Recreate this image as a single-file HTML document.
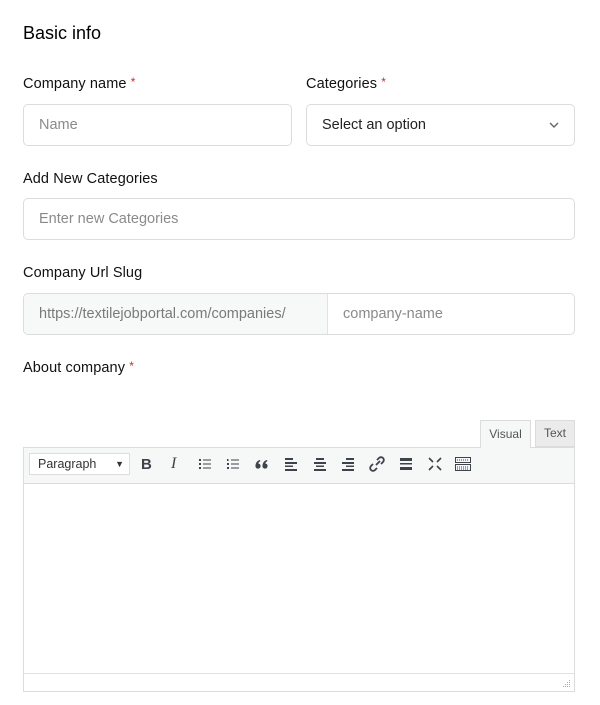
<!DOCTYPE html>
<html><head><style>
*{box-sizing:border-box;margin:0;padding:0}
body{width:600px;height:705px;background:#fff;font-family:"Liberation Sans",sans-serif;color:#111;position:relative;overflow:hidden}
.a{position:absolute}
.lbl{font-size:14.5px;color:#111;letter-spacing:0.1px}
.req{color:#e02424;font-size:12px;vertical-align:top;position:relative;top:-1px}
.inp{border:1px solid #dcdcdc;border-radius:5px;background:#fff;font-size:14.5px;color:#8a8a8a;padding-left:15px;display:flex;align-items:center}
.ic{position:absolute;top:455px;width:18px;height:18px}
</style></head><body>
<div class="a" style="left:23px;top:23px;font-size:18px;color:#000">Basic info</div>
<div class="a lbl" style="left:23px;top:76px">Company name <span class="req">*</span></div>
<div class="a lbl" style="left:306px;top:76px">Categories <span class="req">*</span></div>
<div class="a inp" style="left:23px;top:104px;width:269px;height:42px">Name</div>
<div class="a inp" style="left:306px;top:104px;width:269px;height:42px;color:#222">Select an option
<svg class="a" style="right:14px;top:16px" width="12" height="8" viewBox="0 0 12 8"><path d="M2 2l4 4 4-4" fill="none" stroke="#666" stroke-width="1.4"/></svg></div>
<div class="a lbl" style="left:23px;top:171px">Add New Categories</div>
<div class="a inp" style="left:23px;top:198px;width:552px;height:42px">Enter new Categories</div>
<div class="a lbl" style="left:23px;top:265px">Company Url Slug</div>
<div class="a inp" style="left:23px;top:293px;width:552px;height:42px;padding:0;overflow:hidden">
<div style="width:304px;height:100%;background:#f7f8f8;border-right:1px solid #e2e2e2;display:flex;align-items:center;padding-left:15px;color:#7a7a7a">https://textilejobportal.com/companies/</div>
<div style="padding-left:15px">company-name</div></div>
<div class="a lbl" style="left:23px;top:360px">About company <span class="req">*</span></div>
<div class="a" style="left:480px;top:420px;width:51px;height:28px;background:#f6f7f7;border:1px solid #dcdcdc;border-bottom:none;font-size:12px;color:#555;text-align:center;line-height:26px;z-index:2">Visual</div>
<div class="a" style="left:535px;top:420px;width:40px;height:27px;background:#ebebeb;border:1px solid #dcdcdc;font-size:12px;color:#555;text-align:center;line-height:25px">Text</div>
<div class="a" style="left:23px;top:447px;width:552px;height:245px;border:1px solid #dcdcdc;background:#fff"></div>
<div class="a" style="left:24px;top:448px;width:550px;height:36px;background:#f6f7f7;border-bottom:1px solid #dcdcdc"></div>
<div class="a" style="left:29px;top:453px;width:101px;height:22px;background:#fff;border:1px solid #ddd;font-size:12.5px;color:#333;padding-left:8px;line-height:20px">Paragraph<span style="position:absolute;right:5px;font-size:9px">▼</span></div>
<div class="a" style="left:141px;top:456px;font-weight:bold;font-size:15px;color:#3c434a">B</div>
<div class="a" style="left:171px;top:455px;font-style:italic;font-family:'Liberation Serif',serif;font-size:16px;color:#3c434a">I</div>
<svg class="ic" style="left:196px" viewBox="0 0 18 18"><g fill="#3c434a"><rect x="3" y="4" width="2" height="2"/><rect x="3" y="8" width="2" height="2"/><rect x="3" y="12" width="2" height="2"/><rect x="7" y="4.5" width="8" height="1"/><rect x="7" y="8.5" width="8" height="1"/><rect x="7" y="12.5" width="8" height="1"/></g></svg>
<svg class="ic" style="left:224px" viewBox="0 0 18 18"><g fill="#3c434a"><rect x="3" y="4" width="1.5" height="2"/><rect x="3" y="8" width="2" height="2"/><rect x="3" y="12" width="2" height="2"/><rect x="7" y="4.5" width="8" height="1"/><rect x="7" y="8.5" width="8" height="1"/><rect x="7" y="12.5" width="8" height="1"/></g></svg>
<svg class="ic" style="left:253px" viewBox="0 0 18 18"><g fill="#3c434a"><circle cx="5" cy="11" r="2.6"/><path d="M2.6 10.5C2.6 7.5 4.5 5.5 7 5l.4 1.2C5.8 6.8 5 8 5 9.5z"/><circle cx="12" cy="11" r="2.6"/><path d="M9.6 10.5C9.6 7.5 11.5 5.5 14 5l.4 1.2C12.8 6.8 12 8 12 9.5z"/></g></svg>
<svg class="ic" style="left:282px" viewBox="0 0 18 18"><g fill="#3c434a"><rect x="3" y="3" width="8" height="2"/><rect x="3" y="7" width="12" height="2"/><rect x="3" y="10.5" width="8" height="1.5"/><rect x="3" y="14" width="12" height="2"/></g></svg>
<svg class="ic" style="left:311px" viewBox="0 0 18 18"><g fill="#3c434a"><rect x="5" y="3" width="8" height="2"/><rect x="3" y="7" width="12" height="2"/><rect x="5" y="10.5" width="8" height="1.5"/><rect x="3" y="14" width="12" height="2"/></g></svg>
<svg class="ic" style="left:339px" viewBox="0 0 18 18"><g fill="#3c434a"><rect x="7" y="3" width="8" height="2"/><rect x="3" y="7" width="12" height="2"/><rect x="7" y="10.5" width="8" height="1.5"/><rect x="3" y="14" width="12" height="2"/></g></svg>
<svg class="ic" style="left:368px" viewBox="0 0 18 18"><g fill="none" stroke="#3c434a" stroke-width="1.8"><path d="M8 10l4-4"/><path d="M9 5l2-2a2.5 2.5 0 0 1 4 4l-2 2"/><path d="M9 13l-2 2a2.5 2.5 0 0 1-4-4l2-2"/></g></svg>
<svg class="ic" style="left:397px" viewBox="0 0 18 18"><g fill="#3c434a"><rect x="3" y="3" width="12" height="3"/><rect x="3" y="8" width="12" height="1.5"/><rect x="3" y="12" width="12" height="3"/></g></svg>
<svg class="ic" style="left:426px" viewBox="0 0 18 18"><g fill="none" stroke="#3c434a" stroke-width="1.6"><path d="M3 3l4 4M15 3l-4 4M3 15l4-4M15 15l-4-4"/></g></svg>
<svg class="ic" style="left:454px" viewBox="0 0 18 18"><g fill="none" stroke="#3c434a" stroke-width="1"><rect x="1.5" y="2.5" width="15" height="5"/><rect x="1.5" y="9.5" width="15" height="6"/><path d="M3 5h12M3 12h12M3 14h12" stroke-dasharray="1 1"/></g></svg>
<div class="a" style="left:24px;top:673px;width:550px;height:18px;border-top:1px solid #e2e2e2;background:#fff"></div>
<svg class="a" style="left:562px;top:679px" width="10" height="10"><g fill="#aaa"><rect x="7" y="1" width="1" height="1"/><rect x="5" y="3" width="1" height="1"/><rect x="7" y="3" width="1" height="1"/><rect x="3" y="5" width="1" height="1"/><rect x="5" y="5" width="1" height="1"/><rect x="7" y="5" width="1" height="1"/><rect x="1" y="7" width="1" height="1"/><rect x="3" y="7" width="1" height="1"/><rect x="5" y="7" width="1" height="1"/><rect x="7" y="7" width="1" height="1"/></g></svg>
</body></html>
